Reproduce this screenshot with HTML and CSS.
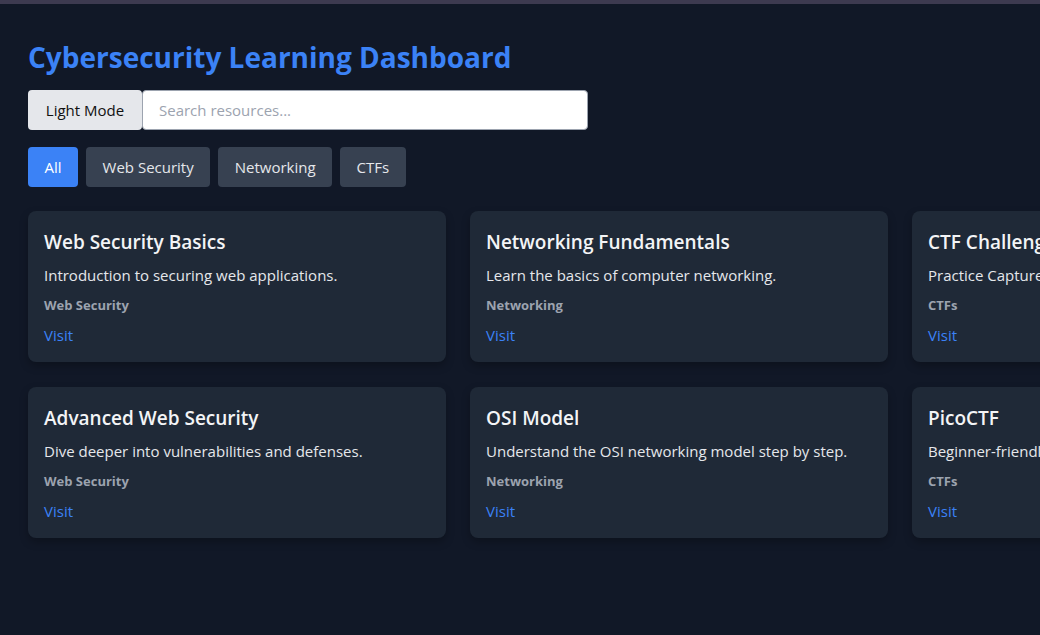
FILE: index.html
```html
<!DOCTYPE html>
<html lang="en">
<head>
<meta charset="utf-8">
<title>Cybersecurity Learning Dashboard</title>
<link rel="stylesheet" href="styles.css">
</head>
<body>
<div class="topbar"></div>
<main class="page">
  <h1 class="title">Cybersecurity Learning Dashboard</h1>
  <div class="controls">
    <button class="mode-btn">Light Mode</button>
    <input class="search" type="text" placeholder="Search resources...">
  </div>
  <div class="filters">
    <button class="filter active">All</button>
    <button class="filter">Web Security</button>
    <button class="filter">Networking</button>
    <button class="filter">CTFs</button>
  </div>
  <div class="grid">
    <div class="card">
      <h2 class="card-title">Web Security Basics</h2>
      <p class="card-desc">Introduction to securing web applications.</p>
      <p class="card-cat">Web Security</p>
      <a class="card-link" href="#">Visit</a>
    </div>
    <div class="card">
      <h2 class="card-title">Networking Fundamentals</h2>
      <p class="card-desc">Learn the basics of computer networking.</p>
      <p class="card-cat">Networking</p>
      <a class="card-link" href="#">Visit</a>
    </div>
    <div class="card">
      <h2 class="card-title">CTF Challenges</h2>
      <p class="card-desc">Practice Capture The Flag challenges.</p>
      <p class="card-cat">CTFs</p>
      <a class="card-link" href="#">Visit</a>
    </div>
    <div class="card">
      <h2 class="card-title">Advanced Web Security</h2>
      <p class="card-desc">Dive deeper into vulnerabilities and defenses.</p>
      <p class="card-cat">Web Security</p>
      <a class="card-link" href="#">Visit</a>
    </div>
    <div class="card">
      <h2 class="card-title">OSI Model</h2>
      <p class="card-desc">Understand the OSI networking model step by step.</p>
      <p class="card-cat">Networking</p>
      <a class="card-link" href="#">Visit</a>
    </div>
    <div class="card">
      <h2 class="card-title">PicoCTF</h2>
      <p class="card-desc">Beginner-friendly CTF practice platform.</p>
      <p class="card-cat">CTFs</p>
      <a class="card-link" href="#">Visit</a>
    </div>
  </div>
</main>
</body>
</html>
```
FILE: styles.css
```css
html, body {
  margin: 0;
  padding: 0;
  background: #111827;
  overflow: hidden;
}
body {
  font-family: "Open Sans", "Noto Sans", sans-serif;
  color: #e5e7eb;
  width: 1040px;
  height: 635px;
}
.topbar {
  height: 4px;
  background: #3d3a50;
}
.page {
  padding: 31px 28px 0 28px;
}
.title {
  margin: 0 0 11px 0;
  font-size: 28px;
  line-height: 44px;
  font-weight: 700;
  color: #3b82f6;
  white-space: nowrap;
}
.controls {
  display: flex;
  height: 40px;
  margin-bottom: 17px;
}
.mode-btn {
  font-family: inherit;
  font-size: 15px;
  background: #e5e7eb;
  color: #111;
  border: none;
  border-radius: 4px;
  padding: 0 16px;
  width: 114px;
  cursor: pointer;
}
.search {
  font-family: inherit;
  font-size: 15px;
  width: 446px;
  box-sizing: border-box;
  border: 1px solid #9ca3af;
  border-radius: 4px;
  padding: 0 16px;
  background: #fff;
  color: #111;
}
.search::placeholder {
  color: #9ca3af;
}
.filters {
  display: flex;
  gap: 8px;
  margin-bottom: 24px;
}
.filter {
  font-family: inherit;
  font-size: 15px;
  height: 40px;
  padding: 0 16.5px;
  border: none;
  border-radius: 4px;
  background: #374151;
  color: #e5e7eb;
  cursor: pointer;
}
.filter.active {
  background: #3b82f6;
  color: #fff;
}
.grid {
  display: grid;
  grid-template-columns: repeat(3, 418px);
  gap: 25px 24px;
}
.card {
  background: #1f2937;
  border-radius: 8px;
  padding: 16px 16px 14px;
  height: 151px;
  box-sizing: border-box;
  box-shadow: 0 4px 8px rgba(0, 0, 0, 0.25);
  display: flex;
  flex-direction: column;
  white-space: nowrap;
}
.card-title {
  margin: 0;
  font-size: 19px;
  line-height: 30px;
  font-weight: 600;
  color: #f3f4f6;
}
.card-desc {
  margin: 6px 0 0;
  font-size: 15px;
  line-height: 24px;
  color: #e5e7eb;
}
.card-cat {
  margin: 8px 0 0;
  font-size: 13px;
  line-height: 20px;
  font-weight: 700;
  color: #9ca3af;
}
.card-link {
  margin-top: 8px;
  font-size: 15px;
  line-height: 24px;
  color: #3b82f6;
  text-decoration: none;
}
```
